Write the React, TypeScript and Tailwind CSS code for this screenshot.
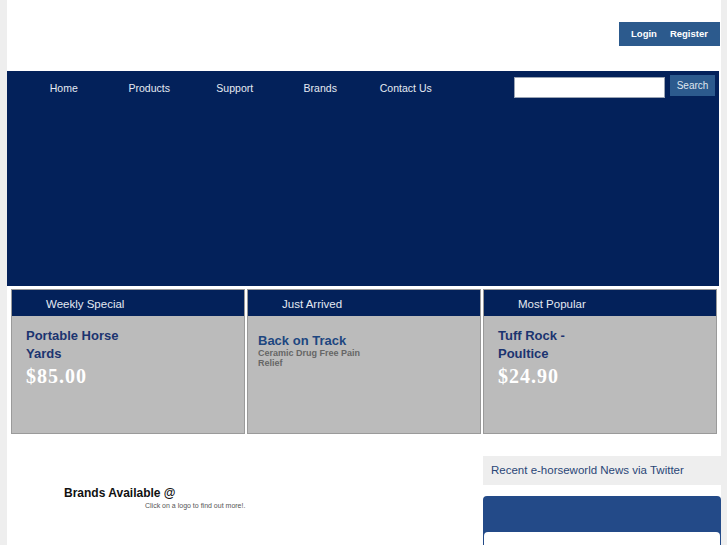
import React from "react";

const navItems = ["Home", "Products", "Support", "Brands", "Contact Us"];

function Card({ title, children }: { title: string; children: React.ReactNode }) {
  return (
    <div className="w-[234px] h-[145px] border border-[#9a9a9a] flex flex-col bg-[#bbbbbb]">
      <div className="h-[26px] bg-[#03215a] flex items-center pl-[34px] pt-[3px] text-[11.5px] text-[#e4e9f2]">
        {title}
      </div>
      <div className="flex-1">{children}</div>
    </div>
  );
}

export default function App() {
  return (
    <div
      className="min-h-[545px] w-[727px] bg-[#eeeeee]"
      style={{ fontFamily: '"Liberation Sans", Arial, sans-serif' }}
    >
      <div className="ml-[7px] w-[714px] min-h-[545px] bg-white flex flex-col">
        {/* header */}
        <div className="h-[71px] flex justify-end items-start pt-[22px] pr-[1px]">
          <div className="w-[101px] h-[24px] bg-[#2c5a8d] flex items-center justify-center gap-[13px] text-[9.5px] font-bold text-white">
            <span>Login</span>
            <span>Register</span>
          </div>
        </div>
        {/* banner */}
        <div className="w-[712px] h-[215px] bg-[#03215a] flex items-start">
          <div className="flex pl-[14px] pt-[10px]">
            {navItems.map((n) => (
              <div key={n} className="w-[85.5px] text-center text-[10.5px] text-[#e6ebf3]">
                {n}
              </div>
            ))}
          </div>
          <div className="ml-auto flex items-start gap-[5px] pr-[4px] pt-[4px]">
            <div className="mt-[2px] w-[151px] h-[21px] bg-white border border-[#9aa4b4]" />
            <div className="w-[45px] h-[21px] bg-[#2c5a8d] text-[10px] text-[#dfe6ef] flex items-center justify-center">
              Search
            </div>
          </div>
        </div>
        {/* cards */}
        <div className="flex gap-[2px] pl-[4px] pt-[3px]">
          <Card title="Weekly Special">
            <div className="pl-[14px] pt-[11px]">
              <div className="text-[13px] leading-[18px] font-bold text-[#1b3470] w-[110px]">
                Portable Horse Yards
              </div>
              <div
                className="text-[20px] leading-[26px] font-bold text-white tracking-[1px]"
                style={{ fontFamily: '"Liberation Serif", "Times New Roman", serif' }}
              >
                $85.00
              </div>
            </div>
          </Card>
          <Card title="Just Arrived">
            <div className="pl-[10px] pt-[18px]">
              <div className="text-[13px] leading-[14px] font-bold text-[#1d4680]">Back on Track</div>
              <div className="text-[9px] leading-[10px] font-bold text-[#666666] w-[105px]">
                Ceramic Drug Free Pain Relief
              </div>
            </div>
          </Card>
          <Card title="Most Popular">
            <div className="pl-[14px] pt-[11px]">
              <div className="text-[13px] leading-[18px] font-bold text-[#1b3470] w-[90px]">
                Tuff Rock - Poultice
              </div>
              <div
                className="text-[20px] leading-[26px] font-bold text-white tracking-[1px]"
                style={{ fontFamily: '"Liberation Serif", "Times New Roman", serif' }}
              >
                $24.90
              </div>
            </div>
          </Card>
        </div>
        {/* bottom */}
        <div className="flex flex-1">
          <div className="w-[476px] pt-[51px]">
            <div className="pl-[57px] text-[12px] font-bold text-[#111111] leading-[16px]">
              Brands Available @
            </div>
            <div className="pl-[138px] text-[7px] text-[#555555] leading-[10px]">
              Click on a logo to find out more!.
            </div>
          </div>
          <div className="w-[238px] pt-[22px]">
            <div className="h-[29px] bg-[#eeeeee] flex items-center pl-[8px] text-[11.5px] text-[#2a4677]">
              Recent e-horseworld News via Twitter
            </div>
            <div className="mt-[11px] h-[60px] bg-[#234a88] rounded-t-[4px] pt-[36px] px-[1px]">
              <div className="h-full bg-white rounded-t-[4px]" />
            </div>
          </div>
        </div>
      </div>
    </div>
  );
}
